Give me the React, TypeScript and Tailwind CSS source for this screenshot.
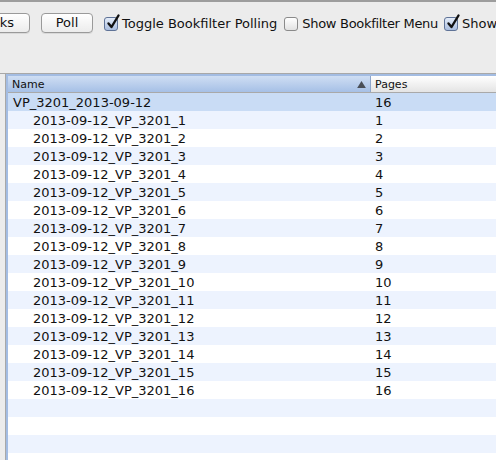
import React from "react";

const font = { fontFamily: '"DejaVu Sans", "Noto Sans", sans-serif' };

function Check({ checked }: { checked: boolean }) {
  return (
    <span
      className={`relative inline-block w-[14px] h-[14px] rounded-[3px] border shrink-0 ${
        checked
          ? "border-[#5f7397] bg-gradient-to-b from-[#e4ecf8] to-[#a9bddf]"
          : "border-[#8a8a8a] bg-gradient-to-b from-[#ffffff] to-[#e2e2e2]"
      }`}
    >
      {checked && (
        <svg viewBox="0 0 14 14" className="absolute left-[1px] top-[-4px] w-[14px] h-[16px] overflow-visible">
          <path d="M2.5 8.5 L5.5 12 L12.5 0.5" fill="none" stroke="#111" strokeWidth="2.4" strokeLinecap="round" strokeLinejoin="round" />
        </svg>
      )}
    </span>
  );
}

function Btn({ children, className = "" }: { children: React.ReactNode; className?: string }) {
  return (
    <button
      type="button"
      className={`h-[20px] rounded-[4px] border border-[#9a9a9a] bg-gradient-to-b from-[#ffffff] to-[#ececec] text-[13px] leading-[18px] text-[#111] shadow-[0_1px_0_rgba(0,0,0,0.08)] shrink-0 ${className}`}
    >
      {children}
    </button>
  );
}

const rows = Array.from({ length: 16 }, (_, i) => ({
  name: `2013-09-12_VP_3201_${i + 1}`,
  pages: String(i + 1),
}));

export default function App() {
  return (
    <div className="w-[496px] h-[460px] bg-[#ececec] border-t-2 border-[#9d9d9d] overflow-hidden" style={font}>
      {/* TOOLBAR */}
      <div className="flex items-start pt-[11px] h-[71px] whitespace-nowrap">
        <div className="flex items-center h-[20px]">
          <Btn className="ml-[-45px] w-[75px] text-right pr-[15px]">Books</Btn>
          <Btn className="ml-[11px] w-[52px]">Poll</Btn>
          <label className="ml-[11px] mt-[2px] flex items-center text-[13px] text-[#111]">
            <Check checked />
            <span className="ml-[4px]">Toggle Bookfilter Polling</span>
          </label>
          <label className="ml-[7px] mt-[2px] flex items-center text-[13px] text-[#111]">
            <Check checked={false} />
            <span className="ml-[4px] tracking-[-0.3px]">Show Bookfilter Menu</span>
          </label>
          <label className="ml-[6px] mt-[2px] flex items-center text-[13px] text-[#111]">
            <Check checked />
            <span className="ml-[4px]">Show</span>
          </label>
        </div>
      </div>

      {/* TABLE */}
      <div className="border-t border-[#a8a8a8] pl-[5px]">
        <div className="border-l border-[#a8a8a8]">
          <div className="border-t-2 border-l-2 border-[#a3bce2]">
            {/* header */}
            <div className="flex h-[17px] border-b border-[#a9a9a9] text-[11px] leading-[17px] text-[#111]">
              <div className="relative w-[363px] pl-[4px] bg-gradient-to-b from-[#cfdef3] to-[#a6c0e6] border-r border-[#8ea6cb]">
                Name
                <svg viewBox="0 0 10 8" className="absolute left-[349px] top-[5px] w-[9px] h-[7px]">
                  <path d="M5 0 L10 8 L0 8 Z" fill="#4a4f57" />
                </svg>
              </div>
              <div className="flex-1 pl-[4px] bg-gradient-to-b from-[#ffffff] to-[#e4e4e4]">Pages</div>
            </div>

            {/* parent row */}
            <div className="flex h-[18px] bg-[#c9dcf5] text-[13px] pt-[2px] leading-[16px] text-[#111]">
              <div className="w-[364px] pl-[5px]">VP_3201_2013-09-12</div>
              <div className="flex-1 pl-[3px]">16</div>
            </div>

            {rows.map((r, i) => (
              <div
                key={r.name}
                className={`flex h-[18px] text-[13px] pt-[2px] leading-[16px] text-[#111] ${
                  i % 2 === 0 ? "bg-[#edf3fe]" : "bg-white"
                }`}
              >
                <div className="w-[364px] pl-[25px]">{r.name}</div>
                <div className="flex-1 pl-[3px]">{r.pages}</div>
              </div>
            ))}

            {[0, 1, 2, 3].map((i) => (
              <div key={i} className={`h-[18px] ${i % 2 === 0 ? "bg-[#edf3fe]" : "bg-white"}`} />
            ))}
          </div>
        </div>
      </div>
    </div>
  );
}
